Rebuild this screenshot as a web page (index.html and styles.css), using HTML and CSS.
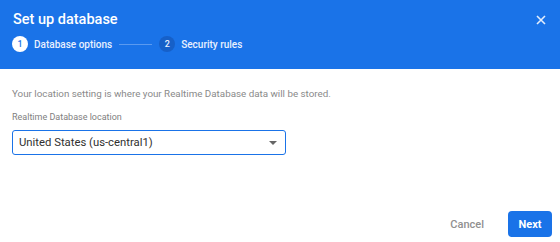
FILE: index.html
```html
<!DOCTYPE html>
<html lang="en">
<head>
    <meta charset="UTF-8">
    <title>Set up database</title>
    <link rel="stylesheet" href="styles.css">
</head>
<body>
    <div class="dialog">
        <div class="header">
            <div class="title-row">
                <h1>Set up database</h1>
                <button class="close" aria-label="Close">
                    <svg width="10" height="10" viewBox="0 0 10 10"><path d="M1 1L9 9M9 1L1 9" stroke="#e3edfc" stroke-width="1.6"/></svg>
                </button>
            </div>
            <div class="steps">
                <span class="step-num active">1</span>
                <span class="step-label">Database options</span>
                <span class="step-line"></span>
                <span class="step-num">2</span>
                <span class="step-label">Security rules</span>
            </div>
        </div>
        <div class="content">
            <p class="info">Your location setting is where your Realtime Database data will be stored.</p>
            <label class="field-label">Realtime Database location</label>
            <div class="select">
                <span>United States (us-central1)</span>
                <span class="arrow"></span>
            </div>
        </div>
        <div class="actions">
            <button class="btn-cancel">Cancel</button>
            <button class="btn-next">Next</button>
        </div>
    </div>
</body>
</html>
```
FILE: styles.css
```css
body {
    margin: 0;
    font-family: Roboto, "Liberation Sans", sans-serif;
    background: #fff;
}
.dialog {
    width: 560px;
    height: 242px;
    display: flex;
    flex-direction: column;
}
.header {
    background-color: #1a73e8;
    height: 69px;
    box-sizing: border-box;
    padding: 11px 12px 0 13px;
}
.title-row {
    display: flex;
    justify-content: space-between;
    align-items: center;
}
h1 {
    margin: 0;
    font-size: 14.5px;
    font-weight: 500;
    color: #fff;
    line-height: 18px;
}
.close {
    background: none;
    border: none;
    padding: 0;
    width: 10px;
    height: 10px;
    margin-right: 2px;
    display: flex;
}
.steps {
    display: flex;
    align-items: center;
    margin-top: 7px;
    margin-left: -1px;
}
.step-num {
    width: 16px;
    height: 16px;
    border-radius: 50%;
    background-color: #1660c8;
    color: #e8f0fe;
    font-size: 9px;
    font-weight: 500;
    display: flex;
    align-items: center;
    justify-content: center;
}
.step-num.active {
    background-color: #fff;
    color: #1a73e8;
}
.step-label {
    color: #e8f0fe;
    font-size: 10px;
    font-weight: 500;
    margin-left: 6px;
}
.step-line {
    width: 33px;
    height: 1px;
    background-color: #5a9af0;
    margin: 0 7px 0 7px;
}
.content {
    padding: 19px 12px 0 12px;
    flex: 1;
}
.info {
    margin: 0;
    font-size: 9.8px;
    color: #8a8a8a;
}
.field-label {
    display: block;
    margin-top: 13px;
    font-size: 9px;
    color: #808080;
}
.select {
    margin-top: 8px;
    width: 274px;
    height: 25px;
    box-sizing: border-box;
    border: 1.5px solid #1a73e8;
    border-radius: 3px;
    display: flex;
    align-items: center;
    justify-content: space-between;
    padding: 0 8px 0 6px;
    font-size: 11.3px;
    color: #303030;
}
.arrow {
    width: 0;
    height: 0;
    border-left: 4px solid transparent;
    border-right: 4px solid transparent;
    border-top: 4px solid #666;
}
.actions {
    display: flex;
    justify-content: flex-end;
    align-items: center;
    padding: 0 8px 5px 0;
    gap: 24px;
}
.btn-cancel {
    background: none;
    border: none;
    font-family: inherit;
    font-size: 11px;
    font-weight: 500;
    color: #909090;
    padding: 0;
}
.btn-next {
    background-color: #1a73e8;
    border: none;
    border-radius: 4px;
    color: #fff;
    font-family: inherit;
    font-size: 11px;
    font-weight: 700;
    width: 44px;
    height: 26px;
    padding: 0;
}
```
